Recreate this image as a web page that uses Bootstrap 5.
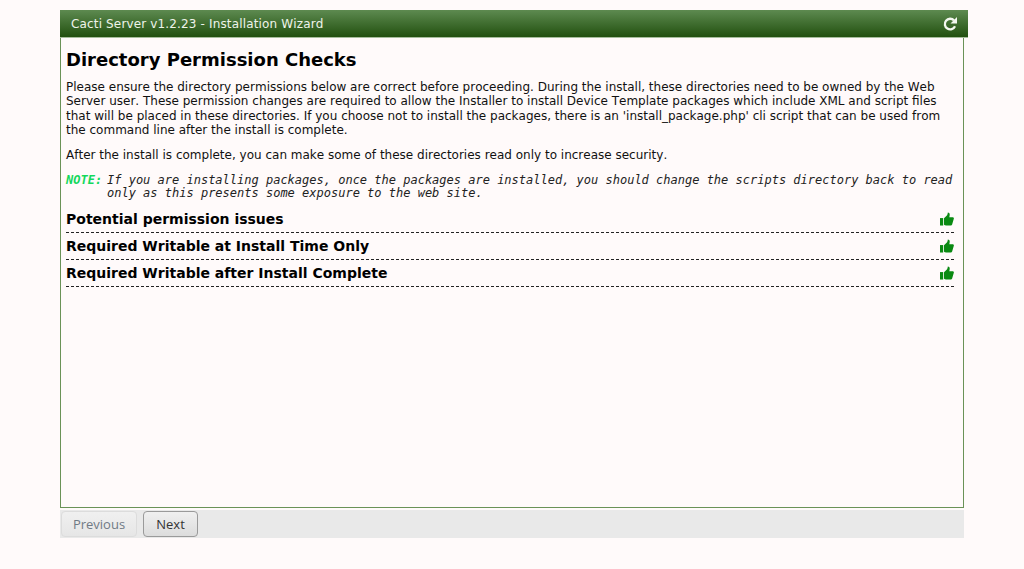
<!DOCTYPE html>
<html lang="en"><head><meta charset="utf-8">
<title>Cacti Server Installation Wizard</title>
<link href="https://cdn.jsdelivr.net/npm/bootstrap@5.3.0/dist/css/bootstrap.min.css" rel="stylesheet">
<style>
html,body{height:100%}
body{background:#fffafa;font-family:"DejaVu Sans",sans-serif;font-size:12px;line-height:14px;color:#111;overflow:hidden;font-kerning:none}
.wiz-wrap{width:908px;margin:10px 0 0 60px}
.wiz-head{height:28px;background:linear-gradient(#5d8a50,#22500f);color:#eef3ea;font-size:12px;padding:0 10px 0 11px;border-bottom:1px solid #a6bd9c;letter-spacing:.15px}
.wiz-body{width:904px;height:470px;border:1px solid #6a9257;border-top:0;padding:11px 9px 0 5px}
.wiz-body h2{font-size:18px;line-height:21px;font-weight:700;margin:0 0 10px;color:#000}
.wiz-body p{margin:0 0 10px;color:#111;line-height:14.4px}
.wiz-note{font-family:"DejaVu Sans Mono",monospace;font-style:italic;font-size:12px;line-height:13px;margin:12px 0 6px;color:#222}
.wiz-note b{color:#14d85c;flex:0 0 41px}
.wiz-row{height:27px;border-bottom:1px dashed #222;font-size:14px;font-weight:700;color:#000;padding-top:6px}
.wiz-foot{width:904px;height:28px;margin-top:2px;background:#e9e9e9;padding:1px 0 0 1px;gap:6px}
.wiz-btn{height:26px;font-size:13px;padding:0;line-height:24px;border-radius:4px;background:linear-gradient(#f0f0f0,#dcdcdc);border:1px solid #9a9a9a;color:#333;font-family:"Open Sans","DejaVu Sans",sans-serif;width:55px}
.wiz-btn:disabled{background:linear-gradient(#f0f0f0,#e6e6e6);border-color:#dcdcdc;color:#707a85;opacity:1;width:76px}
</style></head>
<body>
<div class="wiz-wrap">
  <div class="wiz-head d-flex justify-content-between align-items-center">
    <span>Cacti Server v1.2.23 - Installation Wizard</span>
    <svg width="16" height="16" viewBox="0 0 16 16" aria-hidden="true"><path d="M13 10.200A5.300 5.300 0 1 1 12 4.400" fill="none" stroke="#f4f8f0" stroke-width="2.300"/><path d="M15 1v6.500H8.500z" fill="#f4f8f0"/></svg>
  </div>
  <div class="wiz-body">
    <h2>Directory Permission Checks</h2>
    <p>Please ensure the directory permissions below are correct before proceeding. During the install, these directories need to be owned by the Web Server user. These permission changes are required to allow the Installer to install Device Template packages which include XML and script files that will be placed in these directories. If you choose not to install the packages, there is an 'install_package.php' cli script that can be used from the command line after the install is complete.</p>
    <p>After the install is complete, you can make some of these directories read only to increase security.</p>
    <div class="wiz-note d-flex"><b>NOTE:</b><span>If you are installing packages, once the packages are installed, you should change the scripts directory back to read only as this presents some exposure to the web site.</span></div>
    <div class="wiz-row d-flex justify-content-between"><span>Potential permission issues</span><svg width="14" height="14" viewBox="0 0 15 14"><path d="M0 6h3.400v8H0z" fill="#0a8a12"/><path d="M4.300 6.300 7.600 3c.5-.8.6-1.800.8-3 1.400 0 2.200 1.200 2 2.800L10 5h3.600c1 0 1.500 1 1.200 1.800L13 13c-.2.600-.7 1-1.400 1H6.500c-.9 0-1.500-.4-2.200-.9z" fill="#0a8a12"/></svg></div>
    <div class="wiz-row d-flex justify-content-between"><span>Required Writable at Install Time Only</span><svg width="14" height="14" viewBox="0 0 15 14"><path d="M0 6h3.400v8H0z" fill="#0a8a12"/><path d="M4.300 6.300 7.600 3c.5-.8.6-1.800.8-3 1.400 0 2.200 1.200 2 2.800L10 5h3.600c1 0 1.500 1 1.200 1.800L13 13c-.2.600-.7 1-1.400 1H6.500c-.9 0-1.500-.4-2.200-.9z" fill="#0a8a12"/></svg></div>
    <div class="wiz-row d-flex justify-content-between"><span>Required Writable after Install Complete</span><svg width="14" height="14" viewBox="0 0 15 14"><path d="M0 6h3.400v8H0z" fill="#0a8a12"/><path d="M4.300 6.300 7.600 3c.5-.8.6-1.800.8-3 1.400 0 2.200 1.200 2 2.800L10 5h3.600c1 0 1.500 1 1.200 1.800L13 13c-.2.600-.7 1-1.400 1H6.500c-.9 0-1.500-.4-2.200-.9z" fill="#0a8a12"/></svg></div>
  </div>
  <div class="wiz-foot d-flex">
    <button type="button" class="btn wiz-btn" disabled>Previous</button>
    <button type="button" class="btn wiz-btn">Next</button>
  </div>
</div>
<script src="https://cdn.jsdelivr.net/npm/bootstrap@5.3.0/dist/js/bootstrap.bundle.min.js"></script>
</body></html>
